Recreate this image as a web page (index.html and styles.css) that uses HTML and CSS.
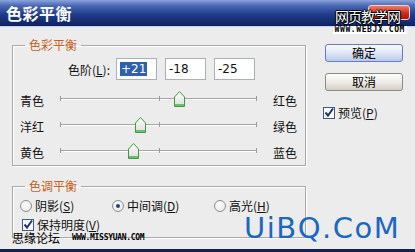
FILE: index.html
```html
<!DOCTYPE html>
<html>
  <head>
    <title>色彩平衡</title>
    <link rel="stylesheet" href="styles.css">
  </head>
  <body>
    <div class="dialog">
      <div class="titlebar">
        <span class="title">色彩平衡</span>
        <span class="close"></span>
      </div>

      <div class="content">
        <div class="main">
          <fieldset class="group balance">
            <legend>色彩平衡</legend>
            <div class="levels">
              <span class="levels-label">色阶(<u>L</u>):</span>
              <span class="num"><span class="sel">+21</span></span>
              <span class="num">-18</span>
              <span class="num">-25</span>
            </div>

            <div class="slider-row">
              <span class="side-label">青色</span>
              <div class="track">
                <i class="tick start"></i><i class="tick mid"></i><i class="tick end"></i>
                <svg class="thumb" style="left: 60.5%" width="13" height="18" viewBox="0 0 13 18"><use href="#thumb"/></svg>
              </div>
              <span class="side-label">红色</span>
            </div>
            <div class="slider-row">
              <span class="side-label">洋红</span>
              <div class="track">
                <i class="tick start"></i><i class="tick mid"></i><i class="tick end"></i>
                <svg class="thumb" style="left: 41%" width="13" height="18" viewBox="0 0 13 18"><use href="#thumb"/></svg>
              </div>
              <span class="side-label">绿色</span>
            </div>
            <div class="slider-row">
              <span class="side-label">黄色</span>
              <div class="track">
                <i class="tick start"></i><i class="tick mid"></i><i class="tick end"></i>
                <svg class="thumb" style="left: 37.5%" width="13" height="18" viewBox="0 0 13 18"><use href="#thumb"/></svg>
              </div>
              <span class="side-label">蓝色</span>
            </div>
          </fieldset>

          <fieldset class="group tone">
            <legend>色调平衡</legend>
            <div class="radios">
              <span class="option"><span class="radio"></span>阴影(<u>S</u>)</span>
              <span class="option"><span class="radio on"></span>中间调(<u>D</u>)</span>
              <span class="option"><span class="radio"></span>高光(<u>H</u>)</span>
            </div>
            <div class="option check-row">
              <svg class="check" width="12" height="12" viewBox="0 0 12 12"><use href="#check"/></svg>保持明度(<u>V</u>)
            </div>
          </fieldset>
        </div>

        <div class="side">
          <button class="btn ok">确定</button>
          <button class="btn cancel">取消</button>
          <div class="option preview">
            <svg class="check" width="12" height="12" viewBox="0 0 12 12"><use href="#check"/></svg>预览(<u>P</u>)
          </div>
        </div>
      </div>

      <!-- watermarks on top of the dialog -->
      <div class="wm-webjx">
        <span class="wm-name">网页教学网</span>
        <span class="wm-url">WWW.WEBJX.COM</span>
      </div>
      <div class="wm-missyuan"><span class="wm-cn">思缘论坛</span><span class="wm-small">WWW.MISSYUAN.COM</span></div>
      <div class="wm-uibq">UiBQ.CoM</div>
    </div>

    <svg width="0" height="0" class="defs">
      <defs>
        <linearGradient id="thumbfill" x1="0" y1="0" x2="0" y2="1">
          <stop offset="0" stop-color="#ffffff"/>
          <stop offset="1" stop-color="#dcdcdc"/>
        </linearGradient>
        <symbol id="thumb" viewBox="0 0 13 18">
          <path d="M1.5 7 L6.5 1.5 L11.5 7 V16.5 H1.5 Z" fill="url(#thumbfill)" stroke="#3e9a3e"/>
          <rect x="2" y="14" width="9" height="2" fill="#6cc06c"/>
        </symbol>
        <symbol id="check" viewBox="0 0 12 12">
          <rect x="0.5" y="0.5" width="11" height="11" fill="#fff" stroke="#3d5a8a"/>
          <path d="M2.5 5.5 L5 8.5 L10 1.5" fill="none" stroke="#1e3578" stroke-width="2"/>
        </symbol>
      </defs>
    </svg>
  </body>
</html>
```

FILE: styles.css
```css
body {
  margin: 0;
  font-family: "Noto Sans CJK SC", "DejaVu Sans", sans-serif;
  font-size: 12px;
  color: #111;
}
.dialog {
  position: relative;
  width: 415px;
  height: 252px;
  overflow: hidden;
  background-color: #ececec;
  box-sizing: border-box;
  border-bottom: 3px solid #14224e;
}
.titlebar {
  display: flex;
  align-items: center;
  height: 27px;
  padding-left: 6px;
  background: linear-gradient(#8ba3dc 0%, #4a68b4 22%, #203c8a 55%, #0d2262 100%);
  border-bottom: 1px solid #c8d2ea;
  box-sizing: border-box;
}
.title {
  color: #fff;
  font-size: 16px;
  font-weight: bold;
  letter-spacing: 0.5px;
  line-height: 20px;
}
.close {
  margin-left: auto;
  margin-right: 5px;
  align-self: flex-start;
  margin-top: 5px;
  width: 42px;
  height: 15px;
  border-radius: 3px;
  background: linear-gradient(#ee7a6a, #c8281c 60%, #a81810);
  border: 1px solid #f4d0cc;
  box-sizing: border-box;
}
.content {
  display: flex;
  padding-top: 10px;
}
.main {
  margin-left: 12px;
  width: 294px;
}
.group {
  margin: 0;
  padding: 0 0 1px 0;
  border: 1px solid #a8a8a8;
  box-shadow: inset 1px 1px 0 #fff, 1px 1px 0 #fff;
}
.group legend {
  margin-left: 12px;
  padding: 0 4px;
  color: #c8601e;
  font-size: 12px;
  line-height: 16px;
}
.levels {
  display: flex;
  align-items: center;
  margin-top: 5px;
  height: 22px;
}
.levels-label {
  width: 97px;
  text-align: right;
  margin-right: 6px;
}
.num {
  display: flex;
  align-items: center;
  width: 41px;
  height: 22px;
  margin-right: 8px;
  padding-left: 3px;
  box-sizing: border-box;
  background-color: #fff;
  border: 1px solid #a9b0b8;
  font-family: "DejaVu Sans", sans-serif;
  font-size: 12px;
}
.sel {
  background-color: #2f5fb3;
  color: #fff;
  padding: 0 1px;
  line-height: 14px;
}
.slider-row {
  display: flex;
  align-items: center;
  height: 26px;
}
.levels + .slider-row {
  margin-top: 6px;
}
.side-label {
  width: 40px;
  padding-left: 7px;
  padding-top: 4px;
  line-height: 14px;
}
.side-label:last-child {
  width: auto;
  padding-left: 16px;
}
.track {
  position: relative;
  width: 197px;
  height: 2px;
  border-top: 1px solid #a4a4a4;
  border-bottom: 1px solid #fff;
  box-sizing: border-box;
}
.tick {
  position: absolute;
  top: -3px;
  width: 1px;
  height: 5px;
  background-color: #9a9a9a;
}
.tick.start { left: 0; }
.tick.mid { left: 50%; }
.tick.end { right: 0; }
.thumb {
  position: absolute;
  top: -9px;
  margin-left: -6.5px;
}
.tone {
  margin-top: 12px;
  padding-bottom: 4px;
}
.radios {
  display: grid;
  grid-template-columns: 92px 102px auto;
  margin-top: 5px;
  padding-left: 7px;
  height: 14px;
  align-items: center;
}
.option {
  display: flex;
  align-items: center;
  line-height: 14px;
}
.radio {
  width: 12px;
  height: 12px;
  margin-right: 3px;
  border-radius: 50%;
  border: 1px solid #8a8e96;
  background: radial-gradient(circle at 40% 35%, #fff, #e4e4e4);
  box-sizing: border-box;
  position: relative;
}
.radio.on::after {
  content: "";
  position: absolute;
  left: 3px;
  top: 3px;
  width: 4px;
  height: 4px;
  border-radius: 50%;
  background-color: #27407e;
}
.check-row {
  margin-top: 4px;
  padding-left: 9px;
  height: 16px;
}
.check {
  margin-right: 3px;
}
.side {
  display: flex;
  flex-direction: column;
  margin-left: 19px;
  padding-top: 7px;
  width: 78px;
}
.btn {
  height: 18px;
  padding: 0;
  font-family: "Noto Sans CJK SC", sans-serif;
  font-size: 12px;
  line-height: 14px;
  color: #000;
  border-radius: 3px;
}
.btn.ok {
  border: 1px solid #5f7fbf;
  background: linear-gradient(#fbfcff, #dfe6f6 50%, #b9c9ea);
}
.btn.cancel {
  margin-top: 11px;
  border: 1px solid #8c8a84;
  background: linear-gradient(#ffffff, #efece6 50%, #d4cfc4);
}
.preview {
  margin-top: 14px;
  margin-left: -2px;
  height: 16px;
}
.defs {
  position: absolute;
}
.wm-webjx {
  position: absolute;
  right: 8px;
  top: 8px;
  display: flex;
  flex-direction: column;
  align-items: flex-end;
}
.wm-name {
  margin-right: 7px;
  color: #fff;
  font-size: 14px;
  letter-spacing: -1px;
  line-height: 16px;
  text-shadow: -1px 0 #000, 1px 0 #000, 0 -1px #000, 0 1px #000;
}
.wm-url {
  margin-top: 2px;
  background-color: #fff;
  padding: 0 2px;
  font-family: "DejaVu Sans Mono", monospace;
  font-weight: bold;
  font-size: 8px;
  line-height: 8px;
  letter-spacing: 0.6px;
  color: #000;
}
.wm-missyuan {
  position: absolute;
  left: 12px;
  top: 232px;
  display: flex;
  align-items: center;
}
.wm-cn {
  font-size: 12px;
  line-height: 12px;
  color: #000;
}
.wm-small {
  margin-left: 12px;
  font-family: "DejaVu Sans Mono", monospace;
  font-weight: bold;
  font-size: 8px;
  line-height: 8px;
  letter-spacing: -0.3px;
  color: #000;
}
.wm-uibq {
  position: absolute;
  left: 244px;
  top: 216px;
  font-family: "DejaVu Sans", sans-serif;
  font-size: 29px;
  line-height: 24px;
  letter-spacing: 1.5px;
  color: #1a67c6;
}
```
